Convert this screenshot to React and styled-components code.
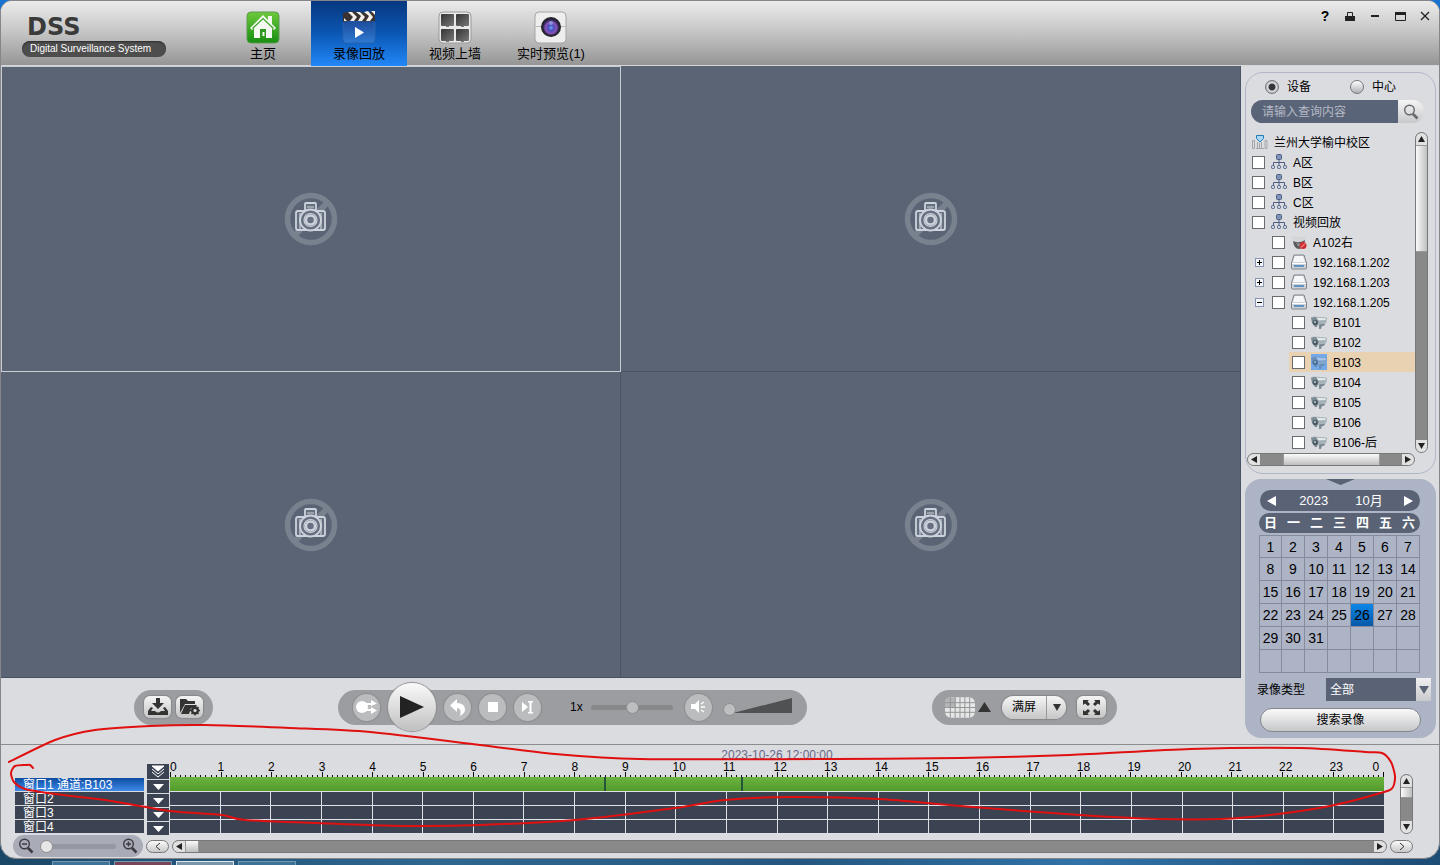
import React, { useState } from "react";
import styled, { createGlobalStyle, css } from "styled-components";

const Global = createGlobalStyle`
  *, *::before, *::after { box-sizing: border-box; }
  body {
    margin: 0;
    font-family: "Liberation Sans", "Noto Sans CJK SC", sans-serif;
    font-size: 12px;
    line-height: 16px;
    color: #000;
  }
  button, input, select { font: inherit; color: inherit; margin: 0; }
  button { padding: 0; border: 0; background: none; cursor: pointer; }
  ul { list-style: none; margin: 0; padding: 0; }
  svg { display: block; }
`;

/* ---------- shell ---------- */
const Desktop = styled.div`
  position: relative;
  min-height: 100vh;
  display: flex;
  flex-direction: column;
  background: linear-gradient(90deg, #1b4766, #2f6791 30%, #24577f 55%, #3172a8 75%, #1d4c74) bottom / 100% 40px no-repeat, #1673d0;
`;
const Window = styled.div`
  flex: 1;
  display: flex;
  flex-direction: column;
  border: 1px solid #85868a;
  border-radius: 12px 12px 16px 16px;
  background: #dbdce0;
  overflow: hidden;
`;
const Taskbar = styled.div`
  display: flex;
  align-items: flex-end;
  gap: 4px;
  height: 6px;
  padding-left: 52px;
`;
const Task = styled.span`
  width: 58px;
  height: 4px;
  border: 1px solid ${(p) => (p.$active ? "#dfe8ee" : "#6d9bb8")};
  border-bottom: 0;
  background: ${(p) => p.$tone || "#3f7296"};
`;

/* ---------- header ---------- */
const Header = styled.header`
  display: flex;
  height: 65px;
  background: linear-gradient(#ebebeb, #c4c4c4 50%, #959595);
  border-bottom: 1px solid #d4d6da;
`;
const Brand = styled.div`
  width: 214px;
  padding: 12px 0 0 21px;
`;
const Logo = styled.div`
  padding-left: 5px;
  font: bold 24px/28px "DejaVu Sans", sans-serif;
  color: #3a3a3a;
  height: 28px;
`;
const Tagline = styled.div`
  width: 144px;
  height: 16px;
  padding-left: 8px;
  border-radius: 8px;
  background: #4e4e4e;
  box-shadow: inset 0 1px 2px #2c2c2c;
  color: #fff;
  font-size: 10px;
  line-height: 15px;
  white-space: nowrap;
`;
const Nav = styled.nav`
  display: flex;
  flex: 1;
`;
const Tab = styled.button`
  width: 96px;
  height: 65px;
  padding-top: 9px;
  display: flex;
  flex-direction: column;
  align-items: center;
  gap: 1px;
  font-size: 13px;
  line-height: 18px;
  white-space: nowrap;
  ${(p) => p.$active && css`background: linear-gradient(#07377f, #0b57b4 50%, #2288f8);`}
`;
const WindowButtons = styled.div`
  display: flex;
  align-items: flex-start;
  gap: 5px;
  padding: 5px 4px 0 0;
`;
const WinButton = styled.button`
  width: 20px;
  height: 20px;
  display: grid;
  place-items: center;
  font-weight: bold;
  font-size: 14px;
`;

/* ---------- main area ---------- */
const Main = styled.main`
  flex: 1;
  display: flex;
`;
const Stage = styled.section`
  flex: 1;
  min-width: 0;
  display: flex;
  flex-direction: column;
`;
const VideoGrid = styled.div`
  flex: 1;
  min-height: 400px;
  display: grid;
  grid-template-columns: 1fr 1fr;
  grid-template-rows: 1fr 1fr;
  background: #5a6475;
`;
const VideoCell = styled.div`
  display: grid;
  place-items: center;
  border: 1px solid #4a5266;
  border-width: 0 1px 1px 0;
  ${(p) => p.$selected && css`border: 1px solid #c8ccd4;`}
`;
const Controls = styled.div`
  height: 66px;
  display: flex;
  align-items: center;
  justify-content: space-between;
  padding: 0 124px 8px 133px;
`;
const Pill = styled.div`
  height: 35px;
  display: flex;
  align-items: center;
  gap: ${(p) => p.$gap || 0}px;
  padding: ${(p) => p.$pad};
  border-radius: 18px;
  background: #9c9da0;
`;
const SquareButton = styled.button`
  width: ${(p) => p.$w || 27}px;
  height: 22px;
  display: grid;
  place-items: center;
  border-radius: 6px;
  background: linear-gradient(#f4f4f4, #c4c4c5);
  box-shadow: 0 0 1px 1px #88898b;
`;
const RoundButton = styled.button`
  width: 27px;
  height: 27px;
  flex: none;
  display: grid;
  place-items: center;
  border-radius: 50%;
  background: #bbbcbd;
  box-shadow: 0 0 1px 1px #8d8e90;
`;
const PlayButton = styled(RoundButton)`
  width: 48px;
  height: 48px;
  background: linear-gradient(#fafafa, #c0c0c1);
`;
const SpeedGroup = styled.div`
  display: flex;
  align-items: center;
  gap: 9px;
  padding: 0 4px 0 21px;
`;
const Speed = styled.output`
  width: 12px;
`;
const Slider = styled.input`
  appearance: none;
  width: ${(p) => p.$w}px;
  height: 14px;
  background: none;
  &::-webkit-slider-runnable-track {
    height: 5px;
    border-radius: 3px;
    background: ${(p) => p.$track || "#87888a"};
  }
  &::-webkit-slider-thumb {
    appearance: none;
    width: 13px;
    height: 13px;
    margin-top: -4px;
    border-radius: 50%;
    border: 1px solid #8c8c8d;
    background: ${(p) => p.$thumb || "#bdbebf"};
  }
`;
const Volume = styled.div`
  position: relative;
  width: 70px;
  height: 20px;
  margin-left: 3px;
`;
const VolumeSlider = styled(Slider)`
  position: absolute;
  left: 0;
  bottom: 1px;
`;
const SplitButton = styled.div`
  display: flex;
  height: 23px;
  border-radius: 12px;
  background: linear-gradient(#f6f6f6, #c6c6c7);
  box-shadow: 0 0 1px 1px #85868a;
`;
const SplitPart = styled.button`
  width: ${(p) => p.$w}px;
  display: grid;
  place-items: center;
  & + & { border-left: 1px solid #98999b; }
`;
const LayoutButton = styled.button`
  display: flex;
  align-items: center;
  gap: 3px;
`;

/* ---------- sidebar ---------- */
const Sidebar = styled.aside`
  width: 198px;
  flex: none;
  padding: 6px 3px 6px 4px;
  display: flex;
  flex-direction: column;
  gap: 5px;
`;
const DevicePanel = styled.section`
  flex: 1;
  display: flex;
  flex-direction: column;
  padding: 3px 7px 7px 1px;
  border: 1px solid #b1b5c6;
  border-radius: 18px;
`;
const RadioRow = styled.div`
  display: flex;
  height: 22px;
  padding-left: 18px;
  gap: 39px;
`;
const RadioLabel = styled.label`
  display: flex;
  align-items: center;
  gap: 8px;
  line-height: 22px;
`;
const Radio = styled.input`
  appearance: none;
  width: 14px;
  height: 14px;
  border: 1px solid #77787c;
  border-radius: 50%;
  background: linear-gradient(#fff, #aeb0b4);
  &:checked {
    background: radial-gradient(circle, #34373d 0 3px, #e4e5e8 4px, #9c9ea3 7px);
  }
`;
const Search = styled.form`
  display: flex;
  height: 23px;
  margin: 2px 4px 9px 4px;
  border-radius: 12px;
  overflow: hidden;
`;
const SearchInput = styled.input`
  flex: 1;
  min-width: 0;
  padding: 1px 0 0 11px;
  border: 0;
  outline: 0;
  background: #5a6478;
  color: #fff;
  &::placeholder { color: #b4b9c6; opacity: 1; }
`;
const SearchButton = styled.button`
  width: 26px;
  display: grid;
  place-items: center;
  background: linear-gradient(#f5f5f5, #c8c9cb);
`;
const TreeArea = styled.div`
  flex: 1;
  display: grid;
  grid-template-columns: 1fr 13px;
  grid-template-rows: 1fr 13px;
`;
const Tree = styled.ul`
  padding-left: 5px;
  min-width: 0;
`;
const TreeRow = styled.li`
  display: flex;
  height: 20px;
  padding-left: ${(p) => p.$indent}px;
`;
const ExpandSlot = styled.span`
  width: ${(p) => (p.$wide ? 17 : 0)}px;
  display: flex;
  align-items: center;
`;
const ExpandButton = styled.button`
  width: 9px;
  height: 9px;
  margin-left: 3px;
  border: 1px solid #8794ae;
  background: #f4f6fa;
`;
const TreeItem = styled.label`
  flex: 1;
  display: flex;
  align-items: center;
  gap: 6px;
  padding-left: ${(p) => (p.$deep ? 3 : 0)}px;
  white-space: nowrap;
  background: ${(p) => (p.$selected ? "#e9d2b1" : "none")};
`;
const NodeName = styled.span`
  padding-top: 2px;
`;
const Check = styled.input`
  appearance: none;
  width: 13px;
  height: 13px;
  border: 1px solid #6a6b6e;
  background: #fff;
`;
const IconBox = styled.span`
  width: 16px;
  height: 16px;
  flex: none;
  background: ${(p) => (p.$selected ? "#8db7ea" : "none")};
`;

/* ---------- scroll bars ---------- */
const ScrollBar = styled.div`
  display: flex;
  flex-direction: ${(p) => (p.$vertical ? "column" : "row")};
  min-width: 13px;
  min-height: 13px;
  flex: ${(p) => (p.$grow ? 1 : "none")};
  border: 1px solid #77787a;
  border-radius: 7px;
  background: #888988;
  overflow: hidden;
`;
const ScrollButton = styled.button`
  flex: none;
  width: ${(p) => (p.$vertical ? "11px" : "12px")};
  height: ${(p) => (p.$vertical ? "12px" : "11px")};
  display: grid;
  place-items: center;
  background: #e1e1e2;
`;
const Thumb = styled.div`
  flex: ${(p) => p.$size};
  background: linear-gradient(${(p) => (p.$vertical ? "90deg" : "180deg")}, #fafafa, #bfbfc0);
  border: 1px solid #98999a;
  border-width: ${(p) => (p.$vertical ? "1px 0" : "0 1px")};
`;
const Rest = styled.div`
  flex: ${(p) => p.$size};
`;

/* ---------- calendar ---------- */
const QueryPanel = styled.section`
  display: flex;
  flex-direction: column;
  height: 259px;
  border-radius: 16px;
  background: #adb4c5;
`;
const Collapse = styled.button`
  align-self: center;
  height: 6px;
  margin-bottom: 5px;
`;
const MonthBar = styled.div`
  display: flex;
  align-items: center;
  justify-content: space-between;
  height: 21px;
  margin: 0 16px 2px 15px;
  padding: 0 7px;
  border-radius: 11px;
  background: #5a6375;
  color: #fff;
  font-size: 13px;
`;
const MonthText = styled.span`
  display: flex;
  gap: 27px;
  padding-left: 2px;
`;
const Calendar = styled.table`
  width: 161px;
  margin: 0 0 5px 14px;
  border-collapse: separate;
  border-spacing: 0;
  table-layout: fixed;
  font-size: 14px;
  text-align: center;
  th {
    height: 20px;
    padding: 0;
    background: #5a6375;
    color: #fff;
    font-size: 13px;
    line-height: 20px;
  }
  th:first-child { border-radius: 10px 0 0 10px; }
  th:last-child { border-radius: 0 10px 10px 0; }
  tbody::before { content: ""; display: block; height: 2px; }
`;
const Day = styled.td`
  height: 23px;
  padding: 0;
  border: 1px solid #858b9b;
  border-width: 0 1px 1px 0;
  &:first-child { border-left-width: 1px; }
  tr:first-child > & { border-top-width: 1px; }
  ${(p) => p.$selected && css`background: linear-gradient(#0b86e8, #0758a8);`}
`;
const TypeRow = styled.div`
  display: flex;
  align-items: center;
  height: 23px;
  padding: 0 5px 0 12px;
`;
const TypeLabel = styled.label`
  width: 69px;
`;
const SelectWrap = styled.div`
  flex: 1;
  display: flex;
  position: relative;
`;
const TypeSelect = styled.select`
  appearance: none;
  width: 100%;
  height: 23px;
  padding: 0 4px;
  border: 0;
  border-radius: 0;
  background: linear-gradient(#5a6375, #5a6375) left / calc(100% - 15px) 100% no-repeat, linear-gradient(#f0f0f1, #c9cacc);
  color: #fff;
`;
const SelectArrow = styled.span`
  position: absolute;
  right: 2px;
  top: 8px;
  pointer-events: none;
`;
const SearchRecord = styled.button`
  height: 24px;
  margin: 7px 15px 0;
  border: 1px solid #85878c;
  border-radius: 12px;
  background: linear-gradient(#fafafa, #c6c7c9);
`;

/* ---------- timeline ---------- */
const Timeline = styled.section`
  border-top: 1px solid #8b8c8e;
  padding: 0 26px 1px 12px;
  display: flex;
  flex-direction: column;
`;
const Stamp = styled.div`
  height: 14px;
  padding: 4px 0 0 128px;
  line-height: 12px;
  text-align: center;
  color: #68688a;
`;
const TrackArea = styled.div`
  display: flex;
  height: 76px;
`;
const Names = styled.ul`
  width: 129px;
  margin: 19px 3px 0 2px;
`;
const Name = styled.li`
  height: 13px;
  margin-bottom: 1px;
  padding-left: 8px;
  color: #fff;
  line-height: 14px;
  white-space: nowrap;
  background: ${(p) => (p.$active ? "linear-gradient(#0c4ca0, #3f8bea)" : "#3b4252")};
`;
const MenuColumn = styled.div`
  width: 22px;
  margin: 5px 1px 0 0;
  display: flex;
  flex-direction: column;
  gap: 1px;
`;
const MenuButton = styled.button`
  height: ${(p) => (p.$tall ? 15 : 13)}px;
  display: grid;
  place-items: center;
  background: #3b4252;
`;
const Chart = styled.div`
  flex: 1;
  min-width: 0;
  margin-right: 16px;
`;
const Ruler = styled.div`
  display: flex;
  height: 18px;
  border-right: 1px solid #000;
  border-image: linear-gradient(transparent 13px, #000 13px) 1;
`;
const Hour = styled.div`
  flex: 1;
  min-width: 0;
  display: flex;
  flex-direction: column;
`;
const HourLabels = styled.div`
  display: flex;
  justify-content: space-between;
  height: 13px;
  padding: 2px 4px 0 0;
  line-height: 12px;
  margin-left: ${(p) => (p.$first ? 0 : -3)}px;
`;
const Ticks = styled.div`
  display: flex;
  align-items: flex-end;
`;
const Tick = styled.span`
  flex: 1;
  height: ${(p) => (p.$major ? 5 : 2)}px;
  border-left: 1px solid #111;
`;
const Track = styled.div`
  position: relative;
  display: flex;
  height: ${(p) => (p.$recorded ? 15 : 14)}px;
  border-bottom: 1px solid #dfe1e6;
  background: ${(p) => (p.$recorded ? "linear-gradient(#6cb440, #529a2a)" : "#3b4252")};
`;
const TrackHour = styled.span`
  flex: 1;
  & + & { border-left: 1px solid #dfe1e6; }
`;
const Gap = styled.span`
  position: absolute;
  top: 0;
  bottom: 0;
  width: 2px;
  background: #24553c;
`;
const TrackScroll = styled.div`
  display: flex;
  margin: 15px 0 1px;
`;
const Footer = styled.div`
  display: flex;
  align-items: center;
  gap: 3px;
  height: 22px;
`;
const ZoomPill = styled.div`
  display: flex;
  align-items: center;
  justify-content: space-between;
  width: 130px;
  height: 22px;
  padding: 0 5px;
  border-radius: 11px;
  background: #a9acb7;
`;
const PageButton = styled.button`
  width: 23px;
  height: 13px;
  flex: none;
  display: grid;
  place-items: center;
  border: 1px solid #77787a;
  border-radius: 7px;
  background: linear-gradient(#fafafa, #c8c8c9);
`;
const Annotation = styled.svg`
  position: absolute;
  left: 0;
  bottom: 0;
  width: 100%;
  height: 145px;
  pointer-events: none;
`;

/* ---------- icons ---------- */
const HomeIcon = () => (
  <svg width="34" height="34" viewBox="0 0 34 34">
    <defs>
      <linearGradient id="home" x1="0" y1="0" x2="0" y2="1">
        <stop offset="0" stopColor="#6cc93c" /><stop offset="1" stopColor="#178e12" />
      </linearGradient>
    </defs>
    <rect x="1" y="2" width="32" height="31" rx="4" fill="url(#home)" stroke="#5f9a52" />
    <path d="M4 18 17 5l5 5V6h4v8l4 4-2 2-2-2v10H8V18l-2 2Z" fill="#f5fbf2" />
    <path d="M6.500 18.500 17 8.500l10.500 10" fill="none" stroke="#3da229" strokeWidth="1.200" />
    <path d="M14 28v-9h6v9Z" fill="#2f9b20" />
    <path d="M16.500 22h2v4h-2Z" fill="#f5fbf2" />
  </svg>
);
const ClapIcon = () => (
  <svg width="34" height="34" viewBox="0 0 34 34">
    <defs>
      <linearGradient id="clap" x1="0" y1="0" x2="0" y2="1">
        <stop offset="0" stopColor="#1c4c9c" /><stop offset="1" stopColor="#2f7ad2" />
      </linearGradient>
    </defs>
    <rect x="1" y="11" width="32" height="22" rx="3" fill="url(#clap)" stroke="#2562b0" />
    <path d="M1 3q8-3 16-1t16-1v10q-8 1-16 0T1 12Z" fill="#3a3230" />
    <path d="m6 2 5 5-3 4h4l3-4-5-5Zm8 0 5 4-3 5h4l3-4-5-5Zm8 0 5 4-3 5h4l3-4-5-6Zm7-1 4 4V1ZM2 8l3 3H2Z" fill="#f3efe9" />
    <path d="M13 17v11l9-5.500Z" fill="#fff" />
  </svg>
);
const WallIcon = () => (
  <svg width="34" height="34" viewBox="0 0 34 34">
    <defs>
      <linearGradient id="wall" x1="0" y1="0" x2="1" y2="1">
        <stop offset="0" stopColor="#343434" /><stop offset="1" stopColor="#777" />
      </linearGradient>
    </defs>
    <rect x="1" y="2" width="32" height="31" rx="4" fill="#e9e9e9" stroke="#9a9a9a" />
    {[[3, 4], [18, 4], [3, 19], [18, 19]].map(([x, y]) => (
      <g key={`${x}-${y}`}>
        <rect x={x} y={y} width="13" height="12" rx="1" fill="url(#wall)" />
        <rect x={x + 5} y={y + 12} width="3" height="1" fill="#777" />
      </g>
    ))}
  </svg>
);
const LensIcon = () => (
  <svg width="34" height="34" viewBox="0 0 34 34">
    <defs>
      <radialGradient id="lens" cx=".5" cy=".55">
        <stop offset="0" stopColor="#70a9ec" /><stop offset=".35" stopColor="#4a4fc0" />
        <stop offset=".7" stopColor="#8a52b8" /><stop offset="1" stopColor="#2b2250" />
      </radialGradient>
    </defs>
    <rect x="1" y="2" width="31" height="31" rx="4" fill="#eeeeef" stroke="#a5a5a5" />
    <path d="M2 16.500h30" stroke="#b9b9b9" />
    <circle cx="17" cy="17" r="10" fill="#23242c" />
    <circle cx="17" cy="17" r="8" fill="url(#lens)" />
    <circle cx="17" cy="13" r="2" fill="#9cc0ef" opacity=".6" />
  </svg>
);
const NoCamera = () => (
  <svg width="54" height="54" viewBox="0 0 54 54" role="img" aria-label="无视频">
    <circle cx="27" cy="27" r="23.500" fill="none" stroke="#79818f" strokeWidth="5.500" />
    <path d="M11 43 43 11" stroke="#79818f" strokeWidth="6" />
    <g fill="#667081" stroke="#cdd3dc" strokeWidth="1.800">
      <rect x="21" y="11" width="11" height="8" rx="1" />
      <path d="M14 19h25q2 0 2 2v15q0 2-2 2H14q-2 0-2-2V21q0-2 2-2Z" />
      <circle cx="26.500" cy="28" r="10.500" />
      <circle cx="26.500" cy="28" r="6.500" fill="none" strokeWidth="1.200" />
      <circle cx="26.500" cy="28" r="4.500" fill="#667081" strokeWidth="2.500" />
      <path d="M16 21v16M37 21v16M23 15h7" strokeWidth="1.200" />
    </g>
  </svg>
);
const Triangle = ({ dir = "down", w = 8, h = 6, color = "#222" }) => {
  const paths = {
    down: `M0 0H${w}L${w / 2} ${h}Z`,
    up: `M0 ${h}H${w}L${w / 2} 0Z`,
    left: `M${w} 0V${h}L0 ${h / 2}Z`,
    right: `M0 0V${h}L${w} ${h / 2}Z`,
  };
  return <svg width={w} height={h} aria-hidden="true"><path d={paths[dir]} fill={color} /></svg>;
};
const Magnifier = ({ sign, size = 16, color = "#3c3c42" }) => (
  <svg width={size} height={size} viewBox="0 0 16 16" fill="none" stroke={color}>
    <circle cx="6.500" cy="6" r="4.800" strokeWidth="1.400" />
    <path d="m10 10 4.500 4.500" strokeWidth="2.600" />
    {sign && <path d="M4 6h5" strokeWidth="1.400" />}
    {sign === "+" && <path d="M6.500 3.500v5" strokeWidth="1.400" />}
  </svg>
);
const TREE_ICONS = {
  root: (
    <g>
      <path d="M.5 6.500v8h2v-8ZM5.500 8v6.500M7.500 9v5.500M9.500 8v6.500M13 6.500h2v8h-2ZM4 14.500h8" fill="none" stroke="#a3a5a9" />
      <path d="M4.500 1.500h7v3L8 8 4.500 4.500Z" fill="#a9d8f5" stroke="#2679b4" />
    </g>
  ),
  org: (
    <g fill="#c9d2e2" stroke="#4b5c80">
      <path d="M8 6v6M2.500 12V8.500h11V12" fill="none" />
      <rect x="5.500" y=".5" width="5" height="5" rx="1" fill="#7f93bb" />
      <rect x=".5" y="11.500" width="3" height="3" rx="1" /><rect x="6.500" y="11.500" width="3" height="3" rx="1" />
      <rect x="12.500" y="11.500" width="3" height="3" rx="1" />
    </g>
  ),
  dome: (
    <g>
      <path d="M1 2q7 2 14 0l-1 6q-6 3-12 0Z" fill="#d4d5d6" />
      <path d="M2 7q6 3 12-1-1 9-6 9T2 7Z" fill="#5b5c60" />
      <path d="M5 9q3 1 5 0l-2 4Z" fill="#9a9b9e" />
      <circle cx="12" cy="11.500" r="3.500" fill="#d22d32" /><path d="m10 13.500 4-4" stroke="#f3c0c0" />
    </g>
  ),
  nvr: (
    <g>
      <path d="M3 1h10l2.500 8v5q0 1-1 1h-13q-1 0-1-1V9Z" fill="#ced1d5" stroke="#7f848b" />
      <path d="M4 2h8l2 6H2Z" fill="#f6f7f8" /><path d="M1 9.500h14" stroke="#fff" />
      <path d="M3 11h10v2H3Z" fill="#5f93c4" />
    </g>
  ),
  cam: (
    <g>
      <path d="m3 3 12.500 1v4L14 10l-8 1Z" fill="#a6b3b9" />
      <path d="m2 3 13.500 1-.5 2.500L6 7Z" fill="#e4eaec" stroke="#8e9ba2" strokeWidth=".6" />
      <path d="M0 3.500 5 3l2.500 4L6 13H4L1 9Z" fill="#7b8b94" />
      <circle cx="4.300" cy="8.500" r="2.600" fill="#4a5963" /><circle cx="4" cy="8" r="1" fill="#c6d0d5" />
      <path d="M9 10h5l-1 2h-2l-1 3H8v-4Z" fill="#7d8b93" />
    </g>
  ),
};
const TreeIcon = ({ kind, tint }) => (
  <svg width="16" height="16" viewBox="0 0 16 16" aria-hidden="true">
    {TREE_ICONS[kind]}
    {tint && <rect width="16" height="16" fill="#4d94ea" opacity=".4" />}
  </svg>
);

/* ---------- data ---------- */
const TABS = [
  { name: "主页", Icon: HomeIcon },
  { name: "录像回放", Icon: ClapIcon },
  { name: "视频上墙", Icon: WallIcon },
  { name: "实时预览(1)", Icon: LensIcon },
];
const NODES = [
  { level: 0, icon: "root", name: "兰州大学榆中校区" },
  { level: 1, icon: "org", name: "A区" },
  { level: 1, icon: "org", name: "B区" },
  { level: 1, icon: "org", name: "C区" },
  { level: 1, icon: "org", name: "视频回放" },
  { level: 2, icon: "dome", name: "A102右" },
  { level: 2, icon: "nvr", name: "192.168.1.202", expand: "+" },
  { level: 2, icon: "nvr", name: "192.168.1.203", expand: "+" },
  { level: 2, icon: "nvr", name: "192.168.1.205", expand: "-" },
  ...["B101", "B102", "B103", "B104", "B105", "B106", "B106-后"].map((name) => ({ level: 3, icon: "cam", name })),
];
const WEEK = ["日", "一", "二", "三", "四", "五", "六"];
const HOURS = Array.from({ length: 24 }, (_, i) => i);
const TENTHS = Array.from({ length: 10 }, (_, i) => i);
const GAPS = [8.58, 11.29];
const STROKE = [
  [9, 762], [55, 740], [95, 730], [150, 726], [205, 725], [290, 728], [370, 732], [480, 745], [555, 754], [640, 759],
  [835, 759], [960, 758], [1070, 755], [1190, 749], [1300, 748], [1365, 752], [1382, 753], [1391, 762], [1395, 776],
  [1393, 787], [1384, 792], [1330, 806], [1270, 815], [1220, 819], [1160, 819], [1080, 815], [960, 806], [880, 799],
  [790, 797], [725, 800], [675, 808], [575, 820], [480, 825], [410, 826], [340, 824], [245, 820], [222, 815],
  [170, 811], [105, 800], [55, 794], [25, 789], [14, 782], [11, 773], [15, 766], [26, 765], [30, 765], [33, 768],
];
const smooth = (pts) =>
  pts.slice(1).reduce((d, p, i) => {
    const p0 = pts[Math.max(i - 1, 0)];
    const p1 = pts[i];
    const p3 = pts[Math.min(i + 2, pts.length - 1)];
    const a = [p1[0] + (p[0] - p0[0]) / 8, p1[1] + (p[1] - p0[1]) / 8];
    const b = [p[0] - (p3[0] - p1[0]) / 8, p[1] - (p3[1] - p1[1]) / 8];
    return `${d}C${a} ${b} ${p}`;
  }, `M${pts[0]}`);

const Scroll = ({ vertical, before = 0, size, after, grow }) => (
  <ScrollBar $vertical={vertical} $grow={grow}>
    <ScrollButton $vertical={vertical} aria-label={vertical ? "向上" : "向左"}>
      <Triangle dir={vertical ? "up" : "left"} w={vertical ? 7 : 6} h={vertical ? 6 : 7} />
    </ScrollButton>
    {before > 0 && <Rest $size={before} />}
    <Thumb $vertical={vertical} $size={size} />
    <Rest $size={after} />
    <ScrollButton $vertical={vertical} aria-label={vertical ? "向下" : "向右"}>
      <Triangle dir={vertical ? "down" : "right"} w={vertical ? 7 : 6} h={vertical ? 6 : 7} />
    </ScrollButton>
  </ScrollBar>
);

function TopBar() {
  const [tab, setTab] = useState(1);
  return (
    <Header>
      <Brand>
        <Logo>DSS</Logo>
        <Tagline>Digital Surveillance System</Tagline>
      </Brand>
      <Nav>
        {TABS.map(({ name, Icon }, i) => (
          <Tab key={name} $active={i === tab} onClick={() => setTab(i)}><Icon />{name}</Tab>
        ))}
      </Nav>
      <WindowButtons>
        <WinButton aria-label="帮助">?</WinButton>
        <WinButton aria-label="锁定">
          <svg width="10" height="10"><path d="M0 5h10v5H0Z" fill="#222" /><path d="M2.500 5V1.500h5V5" fill="none" stroke="#222" /></svg>
        </WinButton>
        <WinButton aria-label="最小化"><svg width="8" height="2"><path d="M0 0h8v2H0Z" fill="#222" /></svg></WinButton>
        <WinButton aria-label="最大化">
          <svg width="11" height="9"><path d="M.5 .5h10v8H.5Z" fill="none" stroke="#222" /><path d="M0 0h11v3H0Z" fill="#222" /></svg>
        </WinButton>
        <WinButton aria-label="关闭"><svg width="10" height="10"><path d="m1 1 8 8m0-8L1 9" stroke="#222" strokeWidth="1.300" /></svg></WinButton>
      </WindowButtons>
    </Header>
  );
}

function PlayControls() {
  return (
    <Controls>
      <Pill $gap={5} $pad="0 10px">
        <SquareButton aria-label="下载">
          <svg width="20" height="18" viewBox="0 0 20 18" fill="#333"><path d="M8 0h4v5h4l-6 6-6-6h4Z" /><path d="M3 9 0 13v4h20v-4l-3-4-2 1 2 3h-4q-3 3-6 0H3l2-3Z" /></svg>
        </SquareButton>
        <SquareButton aria-label="本地录像">
          <svg width="20" height="18" viewBox="0 0 20 18" fill="#333">
            <path d="M0 15V1h6l2 2h7v3H5Z" /><path d="M5 7h12l-1 2-5 1-2 6H1Z" />
            <circle cx="15" cy="12.500" r="3" fill="none" stroke="#333" strokeWidth="2" />
            <path d="M15 7.500v10M10 12.500h10M11.500 9l7 7M18.500 9l-7 7" stroke="#333" strokeWidth="1.500" />
            <circle cx="15" cy="12.500" r="1.600" fill="#ddd" />
          </svg>
        </SquareButton>
      </Pill>
      <Pill $gap={8} $pad="0 14px 0 15px">
        <RoundButton aria-label="同步回放">
          <svg width="22" height="16" viewBox="0 0 22 16" fill="#fff"><circle cx="6" cy="8" r="6" /><path d="M10 4h5V1l6 3.500L15 7V6h-5ZM10 10h5V8l6 3.500-6 3.500v-3h-5Z" /></svg>
        </RoundButton>
        <PlayButton aria-label="播放"><Triangle dir="right" w={24} h={22} /></PlayButton>
        <RoundButton aria-label="倒放">
          <svg width="16" height="17" viewBox="0 0 16 17"><path d="M7 0v4q8 0 8 7 0 3-5 6 2-8-3-8v4L0 6.500Z" fill="#fff" /></svg>
        </RoundButton>
        <RoundButton aria-label="停止"><svg width="10" height="10"><path d="M0 0h10v10H0Z" fill="#fff" /></svg></RoundButton>
        <RoundButton aria-label="单帧">
          <svg width="11" height="13"><path d="M0 1v10l6-5ZM6 0h5v1.500H9.500v9.500H11v1.500H6V11h1.500V1.500H6Z" fill="#fff" /></svg>
        </RoundButton>
        <SpeedGroup>
          <Speed>1x</Speed>
          <Slider type="range" $w={82} defaultValue="50" aria-label="播放速度" />
        </SpeedGroup>
        <RoundButton aria-label="静音">
          <svg width="15" height="14" viewBox="0 0 15 14"><path d="M0 4h4l4-4v13L4 9H0Z" fill="#fff" /><path d="M10 7h4M10 4l3-2M10 10l3 2" stroke="#fff" strokeWidth="1.300" /></svg>
        </RoundButton>
        <Volume>
          <svg width="70" height="17"><path d="M10 16 69 1v15Z" fill="#505153" /></svg>
          <VolumeSlider type="range" $w={70} $track="transparent" defaultValue="0" aria-label="音量" />
        </Volume>
      </Pill>
      <Pill $gap={11} $pad="0 11px 0 13px">
        <LayoutButton aria-label="窗口布局">
          <svg width="30" height="21" viewBox="0 0 31 21">
            <rect width="31" height="21" rx="6" fill="#e5e6e6" /><path d="M0 6q0-6 6-6h5v10H0Z" fill="#b4b5b6" />
            <path d="M5.500 0v21M10.500 0v21M15.500 0v21M20.500 0v21M25.500 0v21M0 5.500h31M0 10.500h31M0 15.500h31" stroke="#929394" />
          </svg>
          <Triangle dir="up" w={13} h={10} color="#333" />
        </LayoutButton>
        <SplitButton>
          <SplitPart $w={44}>满屏</SplitPart>
          <SplitPart $w={20} aria-label="更多"><Triangle w={8} h={7} color="#333" /></SplitPart>
        </SplitButton>
        <SquareButton $w={29} aria-label="全屏">
          <svg width="17" height="15" viewBox="0 0 17 15" fill="#333"><path d="M0 0h6L4.500 1.500 7 4 5 6 2 3.500 0 5ZM17 0h-6l1.500 1.500L10 4l2 2 3-2.500L17 5ZM0 15h6l-1.500-1.500L7 11 5 9l-3 2.500L0 10ZM17 15h-6l1.500-1.500L10 11l2-2 3 2.500 2-1.500Z" /></svg>
        </SquareButton>
      </Pill>
    </Controls>
  );
}

function Devices() {
  return (
    <DevicePanel>
      <RadioRow>
        <RadioLabel><Radio type="radio" name="source" defaultChecked />设备</RadioLabel>
        <RadioLabel><Radio type="radio" name="source" />中心</RadioLabel>
      </RadioRow>
      <Search onSubmit={(e) => e.preventDefault()}>
        <SearchInput type="text" placeholder="请输入查询内容" aria-label="查询" />
        <SearchButton aria-label="搜索"><Magnifier color="#66686e" /></SearchButton>
      </Search>
      <TreeArea>
        <Tree>
          {NODES.map((n) => {
            const selected = n.name === "B103";
            return (
              <TreeRow key={n.name} $indent={n.level === 3 ? 20 : 0}>
                <ExpandSlot $wide={n.level > 1}>
                  {n.expand && (
                    <ExpandButton aria-label={n.expand === "+" ? "展开" : "收起"}>
                      <svg width="7" height="7"><path d={n.expand === "+" ? "M1 3.500h5M3.500 1v5" : "M1 3.500h5"} stroke="#000" /></svg>
                    </ExpandButton>
                  )}
                </ExpandSlot>
                <TreeItem $deep={n.level > 1} $selected={selected}>
                  {n.level > 0 && <Check type="checkbox" />}
                  <IconBox $selected={selected}><TreeIcon kind={n.icon} tint={selected} /></IconBox>
                  <NodeName>{n.name}</NodeName>
                </TreeItem>
              </TreeRow>
            );
          })}
        </Tree>
        <Scroll vertical size={106} after={190} />
        <Scroll before={23} size={96} after={22} />
      </TreeArea>
    </DevicePanel>
  );
}

function Query() {
  const [day, setDay] = useState(26);
  const weeks = [0, 1, 2, 3, 4, 5];
  return (
    <QueryPanel>
      <Collapse aria-label="收起日历"><Triangle w={29} h={6} color="#596274" /></Collapse>
      <MonthBar>
        <button aria-label="上月"><Triangle dir="left" w={9} h={10} color="#fff" /></button>
        <MonthText><span>2023</span><span>10月</span></MonthText>
        <button aria-label="下月"><Triangle dir="right" w={9} h={10} color="#fff" /></button>
      </MonthBar>
      <Calendar>
        <thead><tr>{WEEK.map((w) => <th key={w}>{w}</th>)}</tr></thead>
        <tbody>
          {weeks.map((r) => (
            <tr key={r}>
              {WEEK.map((w, c) => {
                const d = r * 7 + c + 1;
                return <Day key={w} $selected={d === day} onClick={() => d <= 31 && setDay(d)}>{d <= 31 ? d : ""}</Day>;
              })}
            </tr>
          ))}
        </tbody>
      </Calendar>
      <TypeRow>
        <TypeLabel htmlFor="type">录像类型</TypeLabel>
        <SelectWrap>
          <TypeSelect id="type" defaultValue="全部"><option>全部</option></TypeSelect>
          <SelectArrow><Triangle w={10} h={8} color="#5a6375" /></SelectArrow>
        </SelectWrap>
      </TypeRow>
      <SearchRecord>搜索录像</SearchRecord>
    </QueryPanel>
  );
}

function TimelinePanel() {
  return (
    <Timeline>
      <Stamp>2023-10-26 12:00:00</Stamp>
      <TrackArea>
        <Names>
          {["窗口1 通道:B103", "窗口2", "窗口3", "窗口4"].map((n, i) => <Name key={n} $active={i === 0}>{n}</Name>)}
        </Names>
        <MenuColumn>
          <MenuButton $tall aria-label="全部窗口">
            <svg width="14" height="13" fill="none" stroke="#fff"><path d="M1 1h12L7 6Z" fill="#fff" /><path d="m1 4 6 5 6-5M1 7l6 5 6-5" /></svg>
          </MenuButton>
          {[1, 2, 3, 4].map((n) => (
            <MenuButton key={n} aria-label={`窗口${n}菜单`}><Triangle w={11} h={6} color="#fff" /></MenuButton>
          ))}
        </MenuColumn>
        <Chart>
          <Ruler>
            {HOURS.map((h) => (
              <Hour key={h}>
                <HourLabels $first={h === 0}><span>{h}</span>{h === 23 && <span>0</span>}</HourLabels>
                <Ticks>{TENTHS.map((t) => <Tick key={t} $major={t === 0} />)}</Ticks>
              </Hour>
            ))}
          </Ruler>
          <Track $recorded>
            {GAPS.map((g) => <Gap key={g} style={{ left: `${(g / 24) * 100}%` }} />)}
          </Track>
          {[2, 3, 4].map((n) => <Track key={n}>{HOURS.map((h) => <TrackHour key={h} />)}</Track>)}
        </Chart>
        <TrackScroll><Scroll vertical size={10} after={24} /></TrackScroll>
      </TrackArea>
      <Footer>
        <ZoomPill>
          <button aria-label="缩小"><Magnifier sign="-" /></button>
          <Slider type="range" $w={76} $track="#9598a2" $thumb="#e6e6e7" defaultValue="0" aria-label="缩放" />
          <button aria-label="放大"><Magnifier sign="+" /></button>
        </ZoomPill>
        <PageButton aria-label="前一段"><svg width="8" height="9" fill="none" stroke="#333"><path d="M6 1 2 4.500 6 8" /></svg></PageButton>
        <Scroll grow size={12} after={1176} />
        <PageButton aria-label="后一段"><svg width="8" height="9" fill="none" stroke="#333"><path d="m2 1 4 3.500L2 8" /></svg></PageButton>
      </Footer>
    </Timeline>
  );
}

export default function App() {
  return (
    <Desktop>
      <Global />
      <Window>
        <TopBar />
        <Main>
          <Stage>
            <VideoGrid>
              {[1, 2, 3, 4].map((n) => <VideoCell key={n} $selected={n === 1}><NoCamera /></VideoCell>)}
            </VideoGrid>
            <PlayControls />
          </Stage>
          <Sidebar>
            <Devices />
            <Query />
          </Sidebar>
        </Main>
        <TimelinePanel />
      </Window>
      <Taskbar>
        <Task /><Task $tone="#7b4558" /><Task $active $tone="#7895aa" /><Task />
      </Taskbar>
      <Annotation viewBox="0 720 1440 145" preserveAspectRatio="none">
        <path d={smooth(STROKE)} fill="none" stroke="#e01010" strokeWidth="2" strokeLinecap="round" />
      </Annotation>
    </Desktop>
  );
}
